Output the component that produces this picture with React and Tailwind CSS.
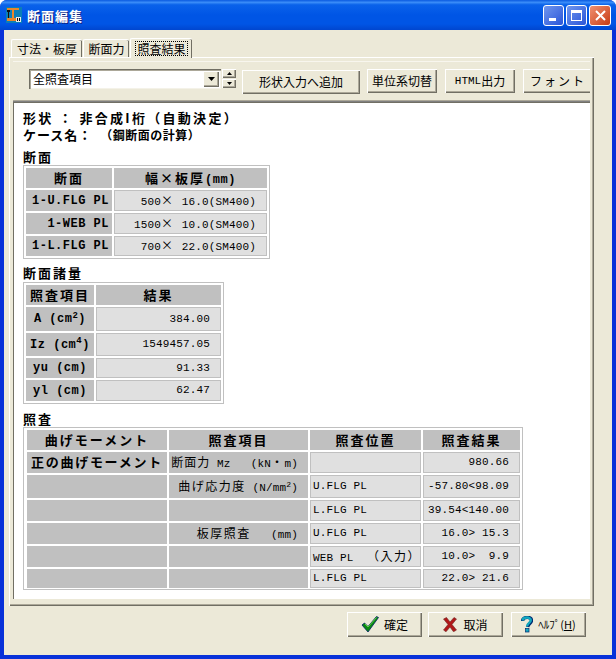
const MONO = "[font-family:'Liberation_Mono','Noto_Sans_CJK_JP',monospace]";
const SANS = "[font-family:'Noto_Sans_CJK_JP','Liberation_Sans',sans-serif]";
const bevel = "bg-[#ece9d8] shadow-[inset_1px_1px_0_#ffffff,inset_-1px_-1px_0_#716f64,inset_-2px_-2px_0_#aca899]";

function J({ children }) {
  return <span className={`${SANS} text-[12px] tracking-[1.5px]`}>{children}</span>;
}

function X() {
  return <span className={`${SANS} text-[12px] tracking-[2px]`}>×</span>;
}

function H({ children, align = "center", className = "" }) {
  const a = align === "right" ? "justify-end pr-[3px]" : "justify-center";
  return (
    <div className={`bg-[#c0c0c0] flex items-center ${a} ${MONO} font-bold text-[12px] tracking-[0.5px] text-black whitespace-pre leading-none ${className}`}>
      <span>{children}</span>
    </div>
  );
}

function BJ({ children }) {
  return <span className={`${SANS} font-bold text-[13px] tracking-[2px]`}>{children}</span>;
}

function V({ children, left = false }) {
  return (
    <div className={`bg-[#e0e0e0] border border-[#c0c0c0] flex items-center ${left ? "justify-start pl-[2px]" : "justify-end pr-[10px]"} ${MONO} text-[11px] tracking-[0.15px] text-black whitespace-pre leading-none`}>
      <span>{children}</span>
    </div>
  );
}

function L({ children }) {
  return (
    <div className={`bg-[#c0c0c0] flex items-center justify-end pr-[10px] ${MONO} text-[11px] tracking-[0.15px] text-black whitespace-pre leading-none`}>
      <span>{children}</span>
    </div>
  );
}

function Heading({ children, className = "" }) {
  return (
    <div className={`${SANS} font-bold text-[13px] tracking-[2px] leading-[16px] text-black ${className}`}>{children}</div>
  );
}

function Btn({ children, className = "" }) {
  return (
    <div className={`${bevel} h-[24px] shrink-0 flex items-center justify-center ${SANS} text-[12px] text-black leading-none ${className}`}>
      {children}
    </div>
  );
}

function AppIcon() {
  return (
    <svg width="16" height="16" viewBox="0 0 16 16" className="shrink-0">
      <rect x="0" y="0" width="16" height="16" fill="#0a7fb8" />
      <rect x="1" y="1" width="12" height="2" fill="#e8862a" />
      <rect x="6" y="3" width="2" height="10" fill="#e8862a" />
      <rect x="1" y="3" width="3" height="2" fill="#111" />
      <rect x="2" y="5" width="1" height="6" fill="#111" />
      <rect x="1" y="11" width="9" height="3" fill="#e8862a" />
      <rect x="10" y="10" width="5" height="5" fill="#e8e8e8" />
      <rect x="11" y="11" width="1" height="3" fill="#111" />
      <rect x="13" y="11" width="1" height="3" fill="#111" />
    </svg>
  );
}

function CheckIcon() {
  return (
    <svg width="18" height="17" viewBox="0 0 18 17" className="shrink-0">
      <path d="M1 9 L3.5 7 L7 10.5 L15.5 0.5 L17.5 1.5 L7 16 Z" fill="#0a8a12" stroke="#001a6a" strokeWidth="0.8" />
      <path d="M4 8 L7 11 L15.5 1.5" fill="none" stroke="#5fd04a" strokeWidth="1" />
    </svg>
  );
}

function XIcon() {
  return (
    <svg width="14" height="15" viewBox="0 0 14 15" className="shrink-0">
      <path d="M0.5 2 L3.5 0.5 L7 5 L11 0.5 L13.5 2 L9 7.5 L13.5 13 L10.5 14.8 L7 10 L3 14.8 L0.5 13 L5 7.5 Z" fill="#b01818" stroke="#6e2a2a" strokeWidth="0.6" />
    </svg>
  );
}

function QIcon() {
  return (
    <svg width="12" height="17" viewBox="0 0 12 17" className="shrink-0">
      <path d="M1.5 5 C1.5 0.5 10.5 0 10.5 4.5 C10.5 7.5 7 7.5 6.7 11" fill="none" stroke="#002a70" strokeWidth="3.4" />
      <path d="M1.5 4.5 C2 0.7 9.8 0.5 9.8 4.3 C9.8 6.8 6.2 7.2 6 10.5" fill="none" stroke="#12a8c0" strokeWidth="2.4" />
      <rect x="4.5" y="12.5" width="3.5" height="3.5" fill="#12a8c0" stroke="#002a70" strokeWidth="0.7" />
    </svg>
  );
}

function Tri({ size = 3, up = false }) {
  return (
    <svg width={size * 2 + 1} height={size + 1} viewBox={`0 0 ${size * 2 + 1} ${size + 1}`}>
      <path d={up ? `M${size + 0.5} 0 L${size * 2 + 1} ${size + 1} L0 ${size + 1} Z` : `M0 0 L${size * 2 + 1} 0 L${size + 0.5} ${size + 1} Z`} fill="#000" />
    </svg>
  );
}

function WinBtn({ className = "", children }) {
  return (
    <div className={`w-[21px] h-[21px] rounded-[3px] border border-white flex items-center justify-center ${className}`}>
      {children}
    </div>
  );
}

export default function App() {
  return (
    <div className="w-[616px] h-[659px] flex flex-col bg-[#0831d9] rounded-t-[7px] overflow-hidden">
      {/* title bar */}
      <div className="h-[30px] shrink-0 flex items-center pl-[6px] pr-[5px] bg-[linear-gradient(180deg,#0a5ae0_0%,#3a8cf8_8%,#0a62ea_16%,#0055e5_50%,#0055e5_80%,#0046cf_100%)]">
        <AppIcon />
        <div className={`ml-[5px] ${SANS} font-bold text-[13px] tracking-[1px] text-white leading-none [text-shadow:1px_1px_0_#0f1f7f]`}>断面編集</div>
        <div className="ml-auto flex gap-[2px]">
          <WinBtn className="bg-[linear-gradient(135deg,#6f96ee,#2a55d8)]">
            <div className="w-[7px] h-[3px] bg-white mt-[9px] mr-[3px]" />
          </WinBtn>
          <WinBtn className="bg-[linear-gradient(135deg,#6f96ee,#2a55d8)]">
            <div className="w-[11px] h-[11px] border border-white border-t-[3px]" />
          </WinBtn>
          <WinBtn className="bg-[linear-gradient(135deg,#f09070,#c83c14)] w-[22px]">
            <svg width="11" height="11" viewBox="0 0 11 11">
              <path d="M1 1 L10 10 M10 1 L1 10" stroke="#fff" strokeWidth="2" />
            </svg>
          </WinBtn>
        </div>
      </div>

      {/* body */}
      <div className="mx-[4px] mb-[4px] flex-1 flex flex-col bg-[#ece9d8] min-h-0">
        {/* tabs */}
        <div className={`h-[27px] shrink-0 flex items-end pl-[7px] ${SANS} text-[12px] text-black leading-none`}>
          <div className="w-[71px] h-[18px] flex items-center justify-center bg-[#ece9d8] border-t border-l border-white shadow-[inset_-1px_0_0_#716f64] rounded-t-[2px]">寸法・板厚</div>
          <div className="w-[46px] h-[18px] ml-[1px] flex items-center justify-center bg-[#ece9d8] border-t border-l border-white shadow-[inset_-1px_0_0_#716f64] rounded-t-[2px]">断面力</div>
          <div className="w-[62px] h-[20px] ml-[1px] -mb-[1px] z-10 flex items-center justify-center bg-[#ece9d8] border-t border-l border-white shadow-[inset_-1px_0_0_#716f64] rounded-t-[2px]">
            <span className="border border-dotted border-black px-[1px] h-[15px] flex items-center">照査結果</span>
          </div>
        </div>

        {/* panel */}
        <div className="ml-[5px] w-[585px] h-[549px] shrink-0 flex flex-col bg-[#ece9d8] border-t border-l border-white pt-[3px] pl-[3px] shadow-[inset_-1px_-1px_0_#716f64,inset_-2px_-2px_0_#aca899]">
          {/* toolbar */}
          <div className="w-[577px] h-[41px] shrink-0 flex items-start overflow-hidden pl-[16px] pt-[7px] border-t border-[#f8f6ee] border-b border-b-[#808080] shadow-[inset_0_-1px_0_#aca899]">
            <div className="w-[192px] h-[20px] shrink-0 bg-white flex items-center shadow-[inset_1px_1px_0_#716f64,inset_2px_2px_0_#aca899,inset_-1px_-1px_0_#f4f2e8]">
              <span className={`flex-1 pl-[4px] ${SANS} text-[12px] text-black leading-none`}>全照査項目</span>
              <div className={`${bevel} w-[16px] h-[16px] mr-[2px] flex items-center justify-center`}>
                <Tri size={3} />
              </div>
            </div>
            <div className="ml-[1px] w-[14px] shrink-0 flex flex-col gap-[1px]">
              <div className={`${bevel} h-[9px] flex items-center justify-center`}><Tri size={2} up /></div>
              <div className={`${bevel} h-[9px] flex items-center justify-center`}><Tri size={2} /></div>
            </div>
            <Btn className="ml-[6px] mt-[1px] w-[118px]">形状入力へ追加</Btn>
            <Btn className="ml-[7px] w-[70px]">単位系切替</Btn>
            <Btn className="ml-[8px] w-[70px]"><span className={`${MONO} text-[11px]`}>HTML</span>出力</Btn>
            <Btn className="ml-[8px] w-[70px]"><span className="tracking-[2px]">フォント</span></Btn>
          </div>

          {/* white report area */}
          <div className="w-[577px] h-[497px] shrink-0 bg-white pl-[9px] pt-[6px] border-t border-l border-[#716f64]">
            <div className={`${SANS} font-bold text-[13px] tracking-[2.3px] leading-[17px] text-black whitespace-pre`}>形状 ： 非合成I桁（自動決定）</div>
            <div className={`${SANS} font-bold text-[13px] tracking-[1px] leading-[17px] text-black whitespace-pre`}>ケース名：  <span className="text-[12px] tracking-[0.5px]">（鋼断面の計算）</span></div>

            <Heading className="mt-[6px]">断面</Heading>
            <div className="w-[247px] h-[94px] border border-[#c0c0c0] p-[2px] grid grid-cols-[86px_153px] grid-rows-[20px_21px_21px_20px] gap-[2px]">
              <H><BJ>断面</BJ></H>
              <H><BJ>幅×板厚</BJ>(mm)</H>
              <H align="right">1-U.FLG PL</H>
              <V>500<X /> 16.0(SM400)</V>
              <H align="right">1-WEB PL</H>
              <V>1500<X /> 10.0(SM400)</V>
              <H align="right">1-L.FLG PL</H>
              <V>700<X /> 22.0(SM400)</V>
            </div>

            <Heading className="mt-[6px] mb-[1px]">断面諸量</Heading>
            <div className="w-[201px] h-[122px] border border-[#c0c0c0] p-[2px] grid grid-cols-[68px_125px] grid-rows-[20px_24px_23px_20px_21px] gap-[2px]">
              <H><BJ>照査項目</BJ></H>
              <H><BJ>結果</BJ></H>
              <H>A (cm<sup className="text-[9px]">2</sup>)</H>
              <V>384.00</V>
              <H>Iz (cm<sup className="text-[9px]">4</sup>)</H>
              <V>1549457.05</V>
              <H>yu (cm)</H>
              <V>91.33</V>
              <H>yl (cm)</H>
              <V>62.47</V>
            </div>

            <Heading className="mt-[7px]">照査</Heading>
            <div className="w-[500px] h-[163px] border border-[#c0c0c0] pl-[3px] pt-[2px] grid grid-cols-[140px_139px_111px_97px] grid-rows-[20px_21px_23px_21px_21px_21px_19px] gap-[2px]">
              <H><BJ>曲げモーメント</BJ></H>
              <H><BJ>照査項目</BJ></H>
              <H><BJ>照査位置</BJ></H>
              <H><BJ>照査結果</BJ></H>

              <H><span className={`${SANS} font-bold text-[13px] tracking-[1.7px]`}>正の曲げモーメント</span></H>
              <L><span className={`${SANS} text-[12px] tracking-[1px]`}>断面力</span> Mz   (kN<J>・</J>m)</L>
              <V left />
              <V>980.66</V>

              <H />
              <L><J>曲げ応力度</J> (N/mm<sup className="text-[8px]">2</sup>)</L>
              <V left>U.FLG PL</V>
              <V>-57.80&lt;98.09</V>

              <H />
              <H />
              <V left>L.FLG PL</V>
              <V>39.54&lt;140.00</V>

              <H />
              <L><J>板厚照査</J>   (mm)</L>
              <V left>U.FLG PL</V>
              <V>16.0&gt; 15.3</V>

              <H />
              <H />
              <V left>WEB PL  <J>（入力）</J></V>
              <V>10.0&gt;  9.9</V>

              <H />
              <H />
              <V left>L.FLG PL</V>
              <V>22.0&gt; 21.6</V>
            </div>
          </div>
        </div>

        {/* footer */}
        <div className="flex justify-end pt-[6px] pr-[26px]">
          <Btn className="w-[75px] h-[25px] gap-[5px]"><CheckIcon />確定</Btn>
          <Btn className="ml-[6px] w-[75px] h-[25px] gap-[6px]"><XIcon />取消</Btn>
          <Btn className="ml-[8px] w-[75px] h-[25px] gap-[5px]"><QIcon /><span className="text-[11px]">ﾍﾙﾌﾟ(<span className="underline">H</span>)</span></Btn>
        </div>
      </div>
    </div>
  );
}
